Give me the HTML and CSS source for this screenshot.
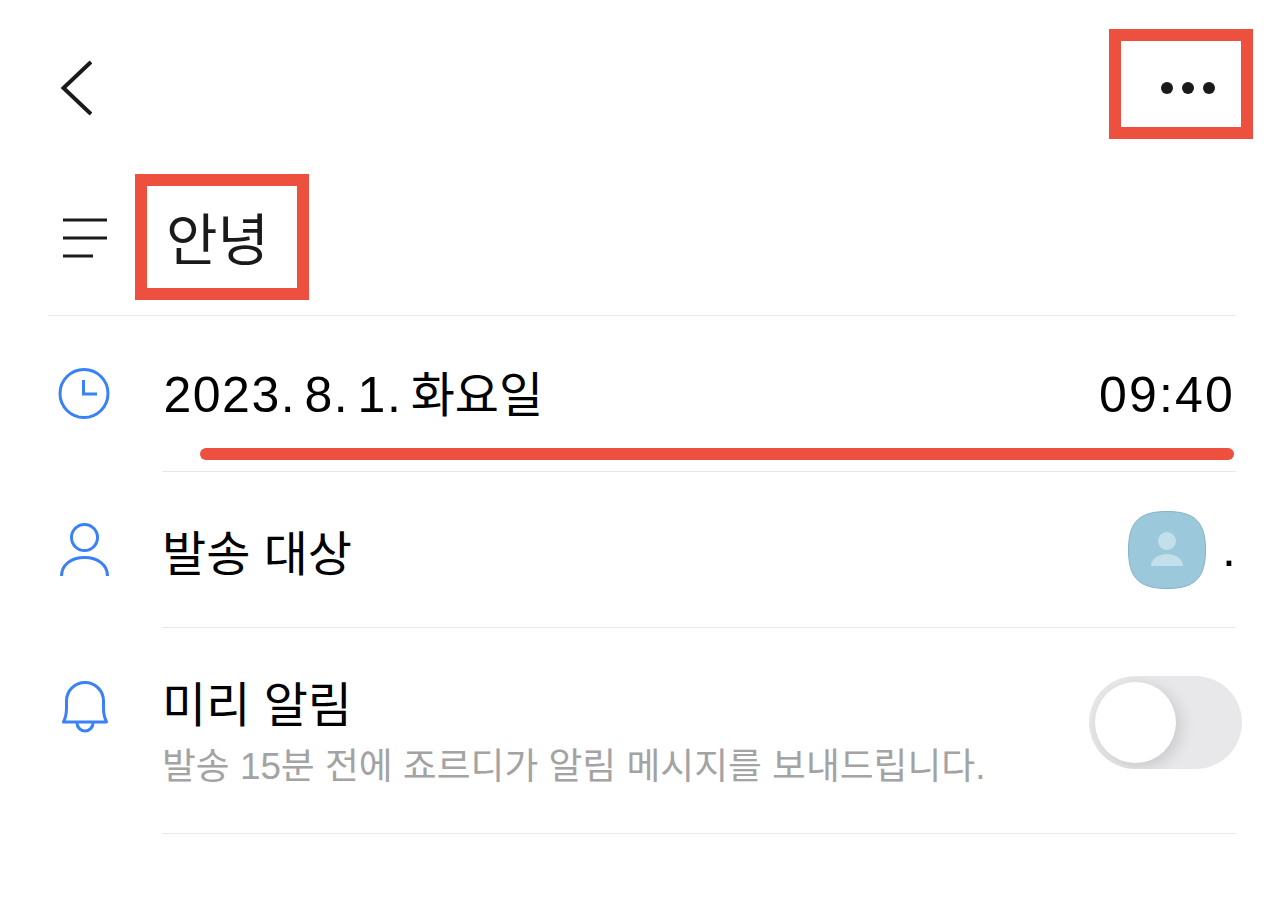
FILE: index.html
```html
<!DOCTYPE html>
<html lang="ko">
<head>
    <meta charset="UTF-8">
    <title>일정 상세</title>
    <link rel="stylesheet" href="styles.css">
</head>
<body>
    <div class="container">
        <div class="topBar">
            <svg class="backIcon" width="32" height="56" viewBox="0 0 32 56" fill="none" stroke="#1a1a1a" stroke-width="4">
                <polyline points="31 2 3.500 28 31 54"/>
            </svg>
            <div class="moreBox">
                <svg width="56" height="14" viewBox="0 0 56 14" fill="#1a1a1a">
                    <circle cx="7" cy="7" r="6"/>
                    <circle cx="28" cy="7" r="6"/>
                    <circle cx="49" cy="7" r="6"/>
                </svg>
            </div>
        </div>

        <div class="titleRow">
            <svg class="menuIcon" width="44" height="40" viewBox="0 0 44 40" fill="none" stroke="#1a1a1a" stroke-width="3">
                <path d="M0 2h44M0 20h44M0 38h30"/>
            </svg>
            <div class="titleBox">
                <h1 class="title">안녕</h1>
            </div>
        </div>

        <div class="list">
            <div class="row">
                <div class="rowIcon">
                    <svg width="56" height="56" viewBox="0 0 56 56" fill="none" stroke="#3a80f6" stroke-width="3">
                        <circle cx="28" cy="27.5" r="24"/>
                        <polyline points="27.5 14 27.5 28 41 28"/>
                    </svg>
                </div>
                <div class="rowBody dateBody">
                    <div class="dateLine">
                        <span><span class="dateNum">2023. 8. 1. </span>화요일</span>
                        <span class="timeNum">09:40</span>
                    </div>
                    <div class="redLine"></div>
                </div>
            </div>

            <div class="row">
                <div class="rowIcon targetIcon">
                    <svg width="56" height="56" viewBox="0 0 56 56" fill="none" stroke="#3a80f6" stroke-width="3">
                        <circle cx="28.5" cy="17.5" r="13"/>
                        <path d="M5.5 56C5.5 45 15 37.5 28.500 37.500S51.500 45 51.500 56"/>
                    </svg>
                </div>
                <div class="rowBody targetBody">
                    <span>발송 대상</span>
                    <div class="targetRight">
                        <svg width="80" height="80" viewBox="0 0 80 80">
                            <path d="M40 1.500C68 1.500 78.500 12 78.500 40S68 78.500 40 78.500 1.500 68 1.500 40 12 1.500 40 1.500Z" fill="#9bc8da" stroke="#86b3c6" stroke-width="1"/>
                            <circle cx="40" cy="31" r="9" fill="#c3e0ea"/>
                            <path d="M24 56C24 49 31 44 40 44S56 49 56 56Z" fill="#c3e0ea"/>
                        </svg>
                        <span class="dot">.</span>
                    </div>
                </div>
            </div>

            <div class="row">
                <div class="rowIcon">
                    <svg width="56" height="56" viewBox="0 0 56 56" fill="none" stroke="#3a80f6" stroke-width="3">
                        <path d="M7.500 44Q10.500 38 10.500 30V23A18.500 18.500 0 0 1 47.500 23V30Q47.500 38 50.500 44Z" stroke-linejoin="round"/>
                        <path d="M21 45a8 8 0 0 0 16 0"/>
                    </svg>
                </div>
                <div class="rowBody alarmBody">
                    <div class="alarmText">
                        <div class="alarmTitle">미리 알림</div>
                        <div class="alarmDesc">발송 15분 전에 죠르디가 알림 메시지를 보내드립니다.</div>
                    </div>
                    <div class="toggle">
                        <div class="knob"></div>
                    </div>
                </div>
            </div>
        </div>
    </div>
</body>
</html>
```

FILE: styles.css
```css
body {
    font-family: "Liberation Sans", "Noto Sans CJK KR", sans-serif;
    margin: 0;
    background-color: #fff;
    color: #000;
}
.container {
    width: 1284px;
    padding-top: 29px;
}
.topBar {
    display: flex;
    justify-content: space-between;
    align-items: center;
    padding: 0 31px 0 60px;
}
.backIcon {
    display: block;
    margin-top: 8px;
}
.moreBox {
    width: 144px;
    height: 110px;
    box-sizing: border-box;
    border: 12px solid #ee5040;
    display: flex;
    justify-content: flex-end;
    align-items: center;
    padding: 8px 25px 0 0;
}
.titleRow {
    display: flex;
    align-items: center;
    margin: 35px 48px 0;
    padding: 0 0 15px 15px;
    border-bottom: 1px solid #e8e8e8;
}
.menuIcon {
    margin: 2px 28px 0 0;
}
.titleBox {
    width: 174px;
    height: 126px;
    box-sizing: border-box;
    border: 12px solid #ee5040;
    padding: 0 0 4px 19px;
    display: flex;
    align-items: center;
}
.title {
    margin: 0;
    font-size: 56px;
    font-weight: 400;
    color: #1a1a1a;
}
.list {
    margin-left: 56px;
    width: 1180px;
}
.row {
    display: flex;
}
.rowIcon {
    width: 106px;
    flex-shrink: 0;
    padding-top: 50px;
}
.rowIcon svg {
    display: block;
}
.targetIcon {
    padding-top: 48px;
}
.rowBody {
    flex: 1;
    border-bottom: 1px solid #e8e8e8;
    font-size: 48px;
}
.dateBody {
    padding: 51px 0 11px;
}
.dateLine {
    display: flex;
    justify-content: space-between;
    height: 56px;
    line-height: 56px;
}
.dateNum {
    font-size: 50px;
    letter-spacing: 1.500px;
    word-spacing: -7px;
    margin-left: 1.500px;
}
.timeNum {
    font-size: 50px;
    letter-spacing: 2.200px;
    margin-right: 1px;
}
.redLine {
    height: 12px;
    margin: 25px 2px 0 38px;
    background-color: #ee5040;
    border-radius: 6px;
}
.targetBody {
    height: 155px;
    display: flex;
    justify-content: space-between;
    align-items: center;
}
.targetRight {
    display: flex;
    align-items: center;
    gap: 15px;
}
.dot {
    font-size: 50px;
    line-height: 56px;
    margin-top: -2px;
}
.alarmBody {
    height: 205px;
    display: flex;
    justify-content: space-between;
    align-items: flex-start;
}
.alarmText {
    padding-top: 50px;
}
.alarmTitle {
    line-height: 56px;
}
.alarmDesc {
    margin-top: 11px;
    font-size: 36.800px;
    line-height: 44px;
    color: #a3a3a3;
}
.toggle {
    width: 153px;
    height: 93px;
    margin: 48px -6px 0 0;
    padding: 6px;
    box-sizing: border-box;
    background-color: #e8e8ea;
    border-radius: 47px;
    overflow: hidden;
}
.knob {
    width: 81px;
    height: 81px;
    background-color: #fff;
    border-radius: 50%;
    box-shadow: 4px 4px 16px rgba(0, 0, 0, 0.14);
}
```
